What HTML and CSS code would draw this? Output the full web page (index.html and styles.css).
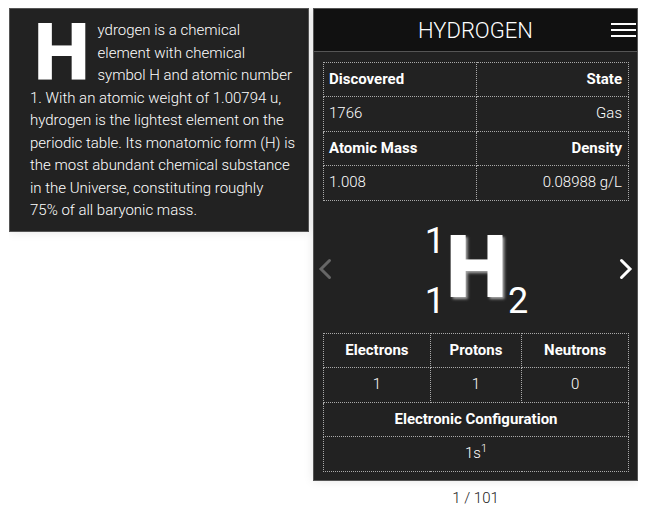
FILE: index.html
```html
<!DOCTYPE html>
<html lang="en">
<head>
<meta charset="utf-8">
<meta name="viewport" content="width=device-width, initial-scale=1">
<title>Hydrogen</title>
<link rel="stylesheet" href="styles.css">
</head>
<body>
<main class="page">
  <section class="panel summary">
    <p><span class="dropcap">H</span>ydrogen is a chemical element with chemical symbol H and atomic number 1. With an atomic weight of 1.00794 u, hydrogen is the lightest element on the periodic table. Its monatomic form (H) is the most abundant chemical substance in the Universe, constituting roughly <br>75% of all baryonic mass.</p>
  </section>
  <div class="viewer">
    <article class="panel card">
      <header class="card-header">
        <h1>HYDROGEN</h1>
        <button class="menu" type="button" aria-label="Menu"><span></span><span></span><span></span></button>
      </header>
      <table class="facts properties">
        <tr><th>Discovered</th><th>State</th></tr>
        <tr><td>1766</td><td>Gas</td></tr>
        <tr><th>Atomic Mass</th><th>Density</th></tr>
        <tr><td>1.008</td><td>0.08988 g/L</td></tr>
      </table>
      <div class="stage">
        <button class="arrow" type="button" aria-label="Previous element" disabled>
          <svg viewBox="0 0 14 22" width="14" height="22"><path d="M11.5 2.500 3 11l8.500 8.500"/></svg>
        </button>
        <div class="symbol">
          <div class="numbers"><span>1</span><span>1</span></div>
          <strong>H</strong>
          <span class="atoms">2</span>
        </div>
        <button class="arrow" type="button" aria-label="Next element">
          <svg viewBox="0 0 14 22" width="14" height="22"><path d="M2.500 2.500 11 11l-8.500 8.500"/></svg>
        </button>
      </div>
      <table class="facts particles">
        <colgroup><col class="electrons"><col class="protons"><col class="neutrons"></colgroup>
        <tr><th>Electrons</th><th>Protons</th><th>Neutrons</th></tr>
        <tr><td>1</td><td>1</td><td>0</td></tr>
        <tr><th colspan="3">Electronic Configuration</th></tr>
        <tr><td colspan="3">1s<sup>1</sup></td></tr>
      </table>
    </article>
    <p class="pager">1 / 101</p>
  </div>
</main>
</body>
</html>
```
FILE: styles.css
```css
* {
  box-sizing: border-box;
}

body {
  margin: 8px 11px 0 9px;
  background: #fff;
  color: #222;
  font: 300 15px/1.5 Roboto, "Liberation Sans", sans-serif;
}

h1,
p {
  margin: 0;
}

button {
  padding: 0;
  border: 0;
  background: none;
}

.page {
  display: grid;
  grid-template-columns: 300fr 325fr;
  gap: 4px;
  align-items: start;
}

.panel {
  border: 1px solid #555;
  background: #222;
  color: #fff;
  box-shadow: 0 0 10px rgba(0, 0, 0, 0.1);
}

.summary {
  padding: 10px 12px 9px 20px;
}

.dropcap {
  float: left;
  padding: 2px 8px 0 4px;
  font-size: 79px;
  font-weight: 900;
  line-height: 64px;
}

.card-header {
  display: grid;
  grid-template-columns: 26px 1fr 26px;
  align-items: center;
  height: 43px;
  border-bottom: 1px solid #555;
  background: #111;
}

.card-header h1 {
  grid-column: 2;
  font-size: 22px;
  font-weight: 300;
  text-align: center;
}

.menu {
  display: grid;
  gap: 4px;
}

.menu span {
  height: 2px;
  margin-right: 1px;
  background: #fff;
}

.facts {
  width: calc(100% - 17px);
  margin: 10px 8px 8px 9px;
  border-collapse: collapse;
  table-layout: fixed;
}

.facts th,
.facts td {
  height: 34px;
  padding: 0 5px 1px;
  border: 1px dotted #aaa;
  text-align: center;
}

.facts td {
  height: 35px;
}

.facts th {
  font-weight: 700;
}

.facts sup {
  font-size: 11px;
  line-height: 0;
}

.properties tr > :first-child {
  text-align: left;
}

.properties tr > :last-child {
  padding-right: 6px;
  text-align: right;
}

.electrons {
  width: 35%;
}

.protons {
  width: 30%;
}

.stage {
  display: flex;
  align-items: center;
  justify-content: space-between;
  height: 114px;
  padding: 5px 4px 0;
}

.arrow {
  display: grid;
  color: #fff;
}

.arrow:disabled {
  color: #666;
}

.arrow path {
  fill: none;
  stroke: currentColor;
  stroke-width: 3;
  stroke-linecap: round;
}

.symbol {
  display: flex;
  gap: 1px;
  height: 100px;
  margin-top: 4px;
  padding-left: 2px;
  font-size: 36px;
  font-weight: 400;
  line-height: 40px;
}

.numbers {
  display: flex;
  flex-direction: column;
  justify-content: space-between;
}

.symbol strong {
  font-size: 87px;
  font-weight: 900;
  line-height: 92px;
  text-shadow: 2px 2px 3px #aaa;
}

.atoms {
  align-self: flex-end;
}

.pager {
  margin-top: 6px;
  text-align: center;
}
```
